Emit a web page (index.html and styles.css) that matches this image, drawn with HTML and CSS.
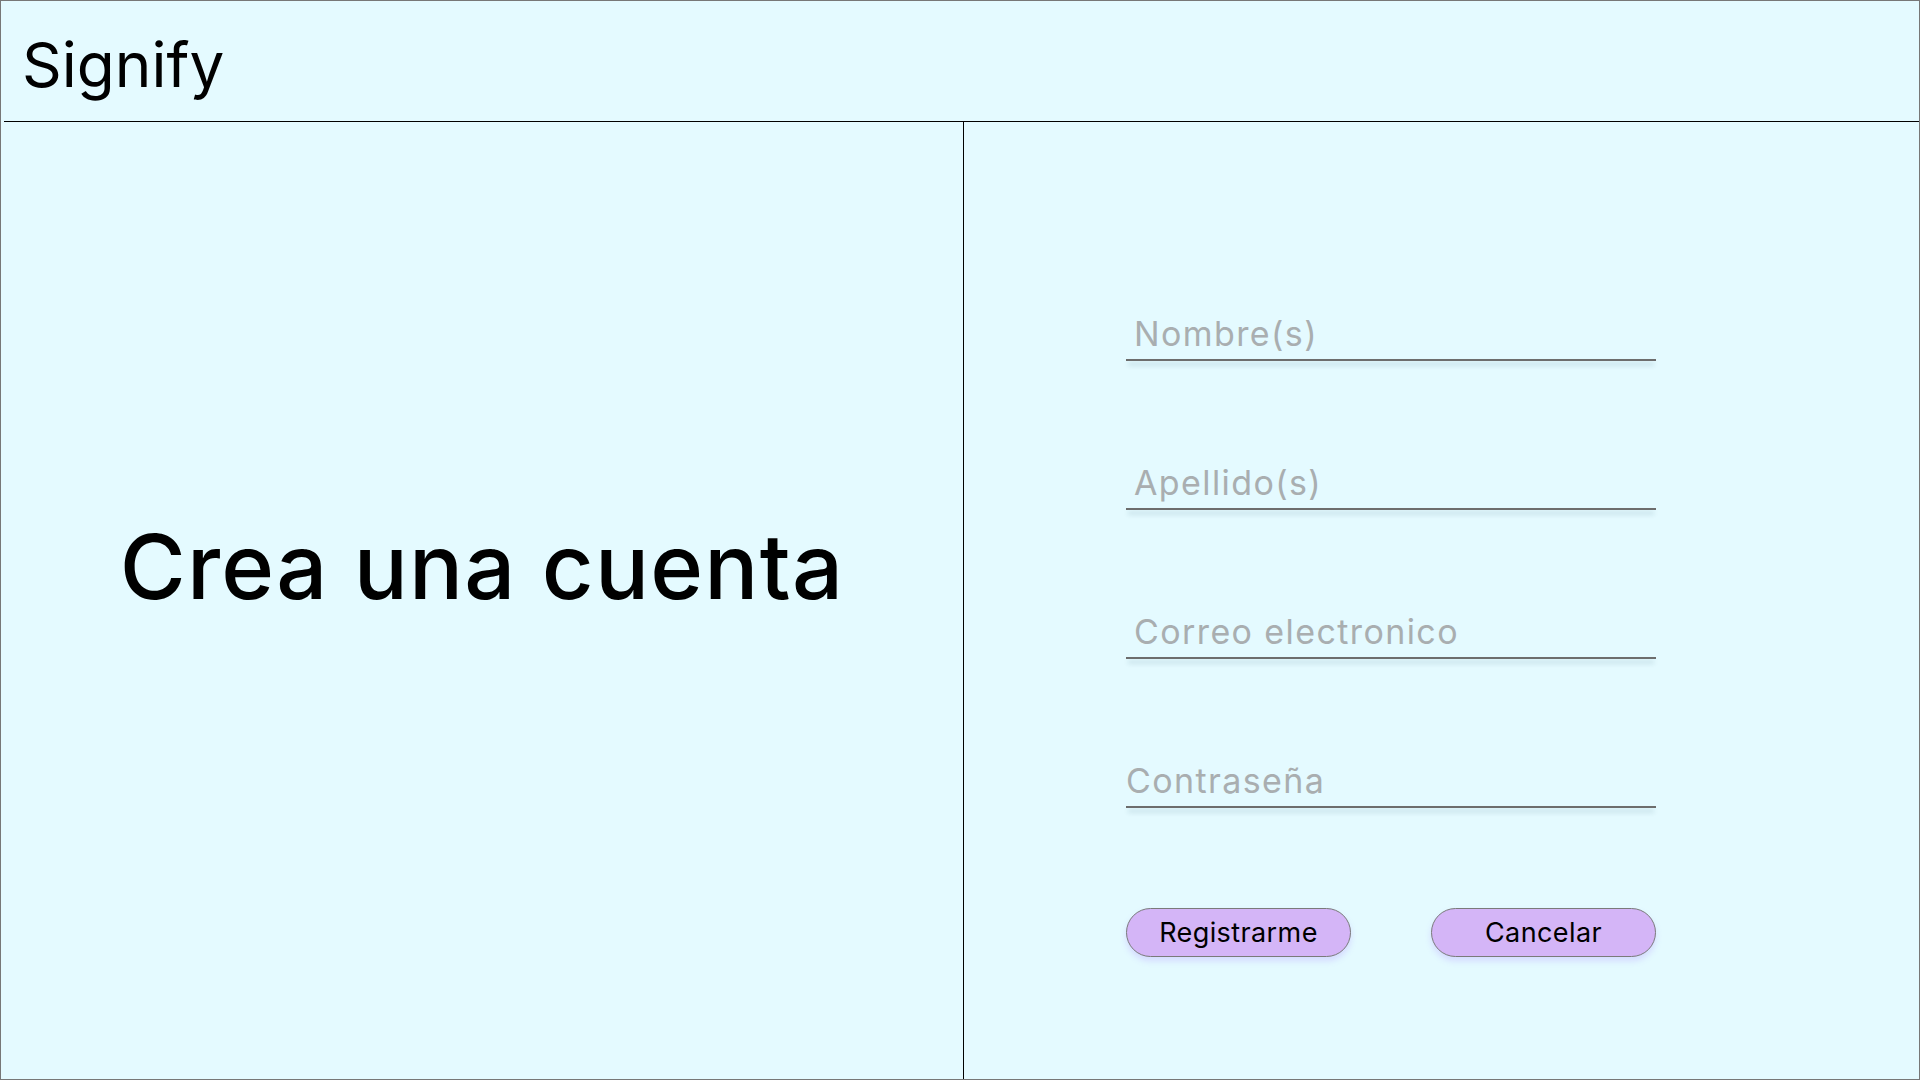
FILE: index.html
```html
<!DOCTYPE html>
<html lang="es">
<head>
<meta charset="utf-8">
<title>Signify - Crea una cuenta</title>
<link rel="stylesheet" href="styles.css">
</head>
<body>
<div class="page">
  <header class="topbar">
    <div class="brand">Signify</div>
  </header>
  <main class="main">
    <section class="intro">
      <h1 class="title">Crea una cuenta</h1>
    </section>
    <section class="form-col">
      <form class="form">
        <label class="field indent"><span class="ph">Nombre(s)</span></label>
        <label class="field indent"><span class="ph">Apellido(s)</span></label>
        <label class="field indent"><span class="ph">Correo electronico</span></label>
        <label class="field"><span class="ph">Contraseña</span></label>
        <div class="actions">
          <button type="button" class="btn">Registrarme</button>
          <button type="button" class="btn">Cancelar</button>
        </div>
      </form>
    </section>
  </main>
</div>
</body>
</html>
```
FILE: styles.css
```css
* { box-sizing: border-box; }
html, body { margin: 0; padding: 0; }
body {
  font-family: Inter, "Open Sans", sans-serif;
  background: #e4faff;
}
.page {
  width: 1920px;
  height: 1080px;
  border: 1px solid #777;
  background: #e4faff;
  display: flex;
  flex-direction: column;
}
.topbar {
  height: 121px;
  flex: none;
  border-bottom: 1px solid #000;
  margin-left: 3px;
  display: flex;
  align-items: center;
  padding-left: 18px;
  padding-top: 6px;
}
.brand {
  font-size: 62px;
  font-weight: 400;
  color: #000;
  letter-spacing: 0;
}
.main {
  flex: 1;
  display: grid;
  grid-template-columns: 963px 1fr;
}
.intro {
  border-right: 1px solid #000;
  display: flex;
  align-items: center;
  justify-content: center;
  padding-bottom: 68px;
}
.title {
  margin: 0;
  font-size: 90px;
  font-weight: 500;
  letter-spacing: 1.2px;
  color: #000;
}
.form-col {
  padding-left: 162px;
  padding-top: 187px;
}
.form {
  width: 530px;
  display: flex;
  flex-direction: column;
}
.field {
  position: relative;
  display: flex;
  align-items: flex-end;
  height: 52px;
  border-bottom: 2px solid #6d6d6d;
  margin-bottom: 97px;
}
.field::after {
  content: "";
  position: absolute;
  left: 2px;
  right: 2px;
  bottom: -2px;
  height: 2px;
  box-shadow: 0 4px 5px rgba(0, 60, 80, 0.22);
}
.field.indent { padding-left: 8px; }
.ph {
  font-size: 34px;
  color: #a9aeb0;
  letter-spacing: 1.4px;
  line-height: 1;
  padding-bottom: 8px;
}
.actions {
  display: flex;
  justify-content: space-between;
  margin-top: 3px;
}
.btn {
  width: 225px;
  height: 49px;
  border-radius: 25px;
  border: 1px solid #7a7a7a;
  background: #d4b5f7;
  box-shadow: 0 4px 6px rgba(160, 110, 255, 0.22);
  font-family: Inter, "Open Sans", sans-serif;
  font-size: 27px;
  color: #000;
  padding: 0;
  letter-spacing: 0.4px;
}
```
